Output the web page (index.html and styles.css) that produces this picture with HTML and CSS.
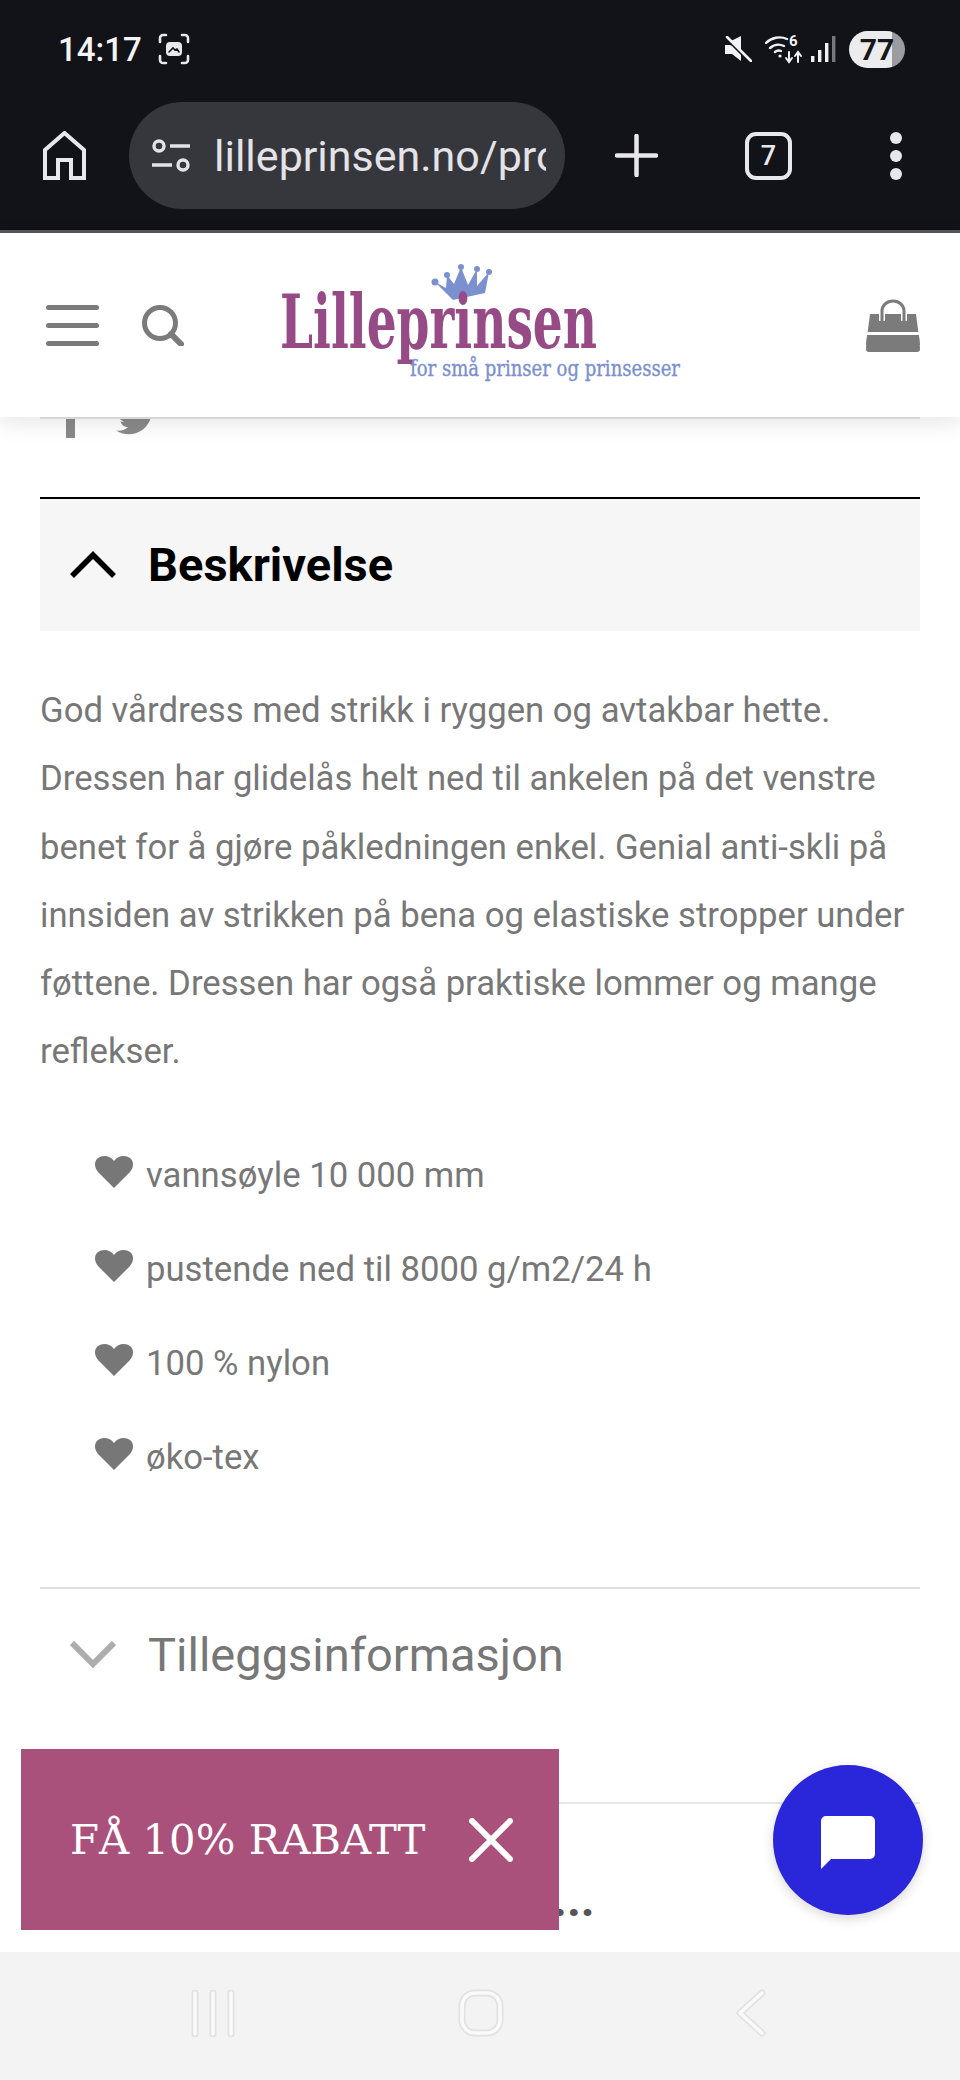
FILE: index.html
```html
<!DOCTYPE html>
<html lang="en">
<head>
  <meta charset="UTF-8">
  <meta name="viewport" content="width=device-width, initial-scale=1.0">
  <title>Lilleprinsen</title>
  <link rel="stylesheet" href="styles.css">
</head>
<body>
  <div class="phone">
    <div class="chrome">
      <div class="status">
        <span class="clock">14:17</span>
        <svg class="shot" viewBox="0 0 32 32" fill="none" stroke="#e8e8ec" stroke-width="2.6" stroke-linecap="round">
          <path d="M2 9V5a3 3 0 0 1 3-3h3M24 2h3a3 3 0 0 1 3 3v4M30 23v4a3 3 0 0 1-3 3h-3M8 30H5a3 3 0 0 1-3-3v-4"/>
          <rect x="8" y="9" width="16" height="14" rx="4" fill="#e8e8ec" stroke="none"/>
          <path d="M11 19l4-4 2 2 2-1 2 3" stroke="#111318" stroke-width="1.6"/>
        </svg>
        <span class="status-space"></span>
        <svg class="mute" viewBox="0 0 27 26" fill="#f2f2f4">
          <path d="M0 9h5l2 1 9 9 0 0v6l-9-7H0z"/>
          <path d="M6 5l10-5v15z"/>
          <path d="M2 1l24 24" stroke="#f2f2f4" stroke-width="2.6" stroke-linecap="round"/>
        </svg>
        <svg class="wifi" viewBox="0 0 38 30" fill="none" stroke="#f2f2f4" stroke-width="2.4" stroke-linecap="round">
          <path d="M1 9a19 19 0 0 1 21-4M5 14a13 13 0 0 1 14-2M10 18a6 6 0 0 1 6-1"/>
          <circle cx="15" cy="22" r="1.6" fill="#f2f2f4" stroke="none"/>
          <path d="M24 18v9M21 24l3 4 3-4M33 28v-9M30 22l3-4 3 4" stroke-width="2"/>
          <text class="wifi-six" x="24" y="12">6</text>
        </svg>
        <svg class="signal" viewBox="0 0 25 26">
          <rect x="0" y="20" width="3.4" height="6" fill="#f2f2f4"/>
          <rect x="7" y="14" width="3.4" height="12" fill="#f2f2f4"/>
          <rect x="14" y="7" width="3.4" height="19" fill="#f2f2f4"/>
          <rect x="21" y="0" width="3.4" height="26" fill="#77787c"/>
        </svg>
        <span class="battery">77</span>
      </div>
      <div class="toolbar">
        <svg class="home" viewBox="0 0 43 49" fill="none" stroke="#e8e8ec" stroke-width="4">
          <path d="M2 47V19L21.500 2 41 19v28H28V29H15v18z"/>
        </svg>
        <div class="url-pill">
          <svg class="tune" viewBox="0 0 38 33" fill="none" stroke="#e3e3e8" stroke-width="3.400">
            <circle cx="7" cy="7" r="5"/>
            <path d="M18 7h20M0 26h20"/>
            <circle cx="31" cy="26" r="5"/>
          </svg>
          <span class="url-text">lilleprinsen.no/produkt</span>
        </div>
        <svg class="plus" viewBox="0 0 43 43" stroke="#e8e8ec" stroke-width="4.500" stroke-linecap="round">
          <path d="M21.500 2v39M2 21.500h39"/>
        </svg>
        <span class="tabs">7</span>
        <div class="dots"><i></i><i></i><i></i></div>
      </div>
    </div>

    <header class="site-head">
      <div class="burger"><i></i><i></i><i></i></div>
      <svg class="search" viewBox="0 0 42 41" fill="none" stroke="#7b7b7b" stroke-width="5">
        <circle cx="18" cy="18" r="15.500"/>
        <path d="M29 29l10 10" stroke-width="6" stroke-linecap="round"/>
      </svg>
      <svg class="logo" viewBox="0 0 420 130">
        <path fill="#7b90cf" d="M165 22l18 18 32-7 4-21-12 14-0-17-9 16-7-18-7 17-7-9-1 13z"/>
        <g fill="#7b90cf">
          <circle cx="165" cy="22" r="3.500"/>
          <circle cx="177" cy="15" r="3"/>
          <circle cx="191" cy="7" r="3"/>
          <circle cx="207" cy="9" r="3"/>
          <circle cx="219" cy="12" r="3"/>
        </g>
        <text class="logo-name" x="10" y="88" textLength="317" lengthAdjust="spacingAndGlyphs">Lilleprinsen</text>
        <text class="logo-sub" x="140" y="116" textLength="270" lengthAdjust="spacingAndGlyphs">for små prinser og prinsesser</text>
      </svg>
      <svg class="bag" viewBox="0 0 54 53">
        <path d="M4 15h46l4 31H0z" fill="#7b7b7b"/>
        <path d="M1 36h52l1 14a3 3 0 0 1-3 3H3a3 3 0 0 1-3-3z" fill="#7b7b7b"/>
        <path d="M0 33h54v3H0z" fill="#fff"/>
        <path d="M16 22V12a11 10 0 0 1 22 0v10" fill="none" stroke="#fff" stroke-width="6"/>
        <path d="M16 22V12a11 10 0 0 1 22 0v10" fill="none" stroke="#7b7b7b" stroke-width="3"/>
      </svg>
    </header>

    <main class="page">
      <div class="share">
        <span class="fb"></span>
        <svg class="bird" viewBox="0 0 24 24" fill="#8a8a8a">
          <path d="M23.950 4.570a10 10 0 0 1-2.820.77 4.960 4.960 0 0 0 2.160-2.720c-.95.55-2 .95-3.120 1.180a4.920 4.920 0 0 0-8.380 4.480C7.690 8.100 4.070 6.130 1.640 3.160a4.820 4.820 0 0 0-.67 2.480c0 1.710.87 3.210 2.190 4.100a4.900 4.900 0 0 1-2.230-.61v.06a4.920 4.920 0 0 0 3.950 4.830 5 5 0 0 1-2.210.08 4.940 4.940 0 0 0 4.600 3.420A9.870 9.870 0 0 1 0 19.540a13.940 13.940 0 0 0 7.550 2.210c9.050 0 14-7.500 14-13.980 0-.21 0-.42-.02-.63a9.940 9.940 0 0 0 2.460-2.550z"/>
        </svg>
      </div>

      <section class="acc-open">
        <div class="acc-head">
          <svg class="chev" viewBox="0 0 46 27" fill="none" stroke="#000" stroke-width="5.500">
            <path d="M2 25L23 4l21 21"/>
          </svg>
          <h2>Beskrivelse</h2>
        </div>
        <p class="desc">God vårdress med strikk i ryggen og avtakbar hette. Dressen har glidelås helt ned til ankelen på det venstre benet for å gjøre påkledningen enkel. Genial anti-skli på innsiden av strikken på bena og elastiske stropper under føttene. Dressen har også praktiske lommer og mange reflekser.</p>
        <ul class="facts">
          <li><svg class="heart" viewBox="0 0 38 32"><path d="M19 32L3 16C-1 11-1 5 3 2c4-3 12-3 16 3 4-6 12-6 16-3 4 3 4 9 0 14z"/></svg>vannsøyle 10 000 mm</li>
          <li><svg class="heart" viewBox="0 0 38 32"><path d="M19 32L3 16C-1 11-1 5 3 2c4-3 12-3 16 3 4-6 12-6 16-3 4 3 4 9 0 14z"/></svg>pustende ned til 8000 g/m2/24 h</li>
          <li><svg class="heart" viewBox="0 0 38 32"><path d="M19 32L3 16C-1 11-1 5 3 2c4-3 12-3 16 3 4-6 12-6 16-3 4 3 4 9 0 14z"/></svg>100 % nylon</li>
          <li><svg class="heart" viewBox="0 0 38 32"><path d="M19 32L3 16C-1 11-1 5 3 2c4-3 12-3 16 3 4-6 12-6 16-3 4 3 4 9 0 14z"/></svg>øko-tex</li>
        </ul>
      </section>

      <section class="acc-closed">
        <div class="acc-head-plain">
          <svg class="chev" viewBox="0 0 46 27" fill="none" stroke="#adadad" stroke-width="6">
            <path d="M2 2l21 21L44 2"/>
          </svg>
          <h3>Tilleggsinformasjon</h3>
        </div>
      </section>

      <section class="more">
        <span class="more-dots">...</span>
      </section>
    </main>

    <nav class="android-nav">
      <svg class="nav-recent" viewBox="0 0 44 47" fill="none" stroke-linecap="round">
        <path d="M4 3v41M22 3v41M40 3v41" stroke="#e2e2e2" stroke-width="7"/>
        <path d="M4 3v41M22 3v41M40 3v41" stroke="#fafafa" stroke-width="3.500"/>
      </svg>
      <svg class="nav-home" viewBox="0 0 46 48" fill="none">
        <rect x="4" y="4" width="38" height="40" rx="13" stroke="#e2e2e2" stroke-width="7"/>
        <rect x="4" y="4" width="38" height="40" rx="13" stroke="#fafafa" stroke-width="3.500"/>
      </svg>
      <svg class="nav-back" viewBox="0 0 31 48" fill="none" stroke-linecap="round" stroke-linejoin="round">
        <path d="M27 4L5 24l22 20" stroke="#e2e2e2" stroke-width="7"/>
        <path d="M27 4L5 24l22 20" stroke="#fafafa" stroke-width="3.500"/>
      </svg>
    </nav>

    <div class="promo">
      <span>FÅ 10% RABATT</span>
      <svg class="promo-x" viewBox="0 0 44 44" stroke="#fff" stroke-width="6" stroke-linecap="round">
        <path d="M3 3l38 38M41 3L3 41"/>
      </svg>
    </div>

    <div class="chat">
      <svg class="chat-icon" viewBox="0 0 54 53">
        <path fill="#fff" d="M5 0h44a5 5 0 0 1 5 5v33a5 5 0 0 1-5 5H10L0 53V5a5 5 0 0 1 5-5z"/>
      </svg>
    </div>
  </div>
</body>
</html>
```

FILE: styles.css
```css
* {
  box-sizing: border-box;
}

body {
  margin: 0;
  font-family: Roboto, Arial, sans-serif;
  background-color: #fff;
}

.phone {
  position: relative;
  display: flex;
  flex-direction: column;
  width: 960px;
  height: 2080px;
  overflow: hidden;
}

/* browser chrome */
.chrome {
  height: 233px;
  flex-shrink: 0;
  background-color: #111318;
  border-bottom: 3px solid #55565b;
}

.status {
  display: flex;
  align-items: center;
  height: 98px;
  padding: 0 55px 0 58px;
}

.clock {
  font-size: 33px;
  font-weight: 500;
  color: #f4f4f6;
}

.shot {
  width: 32px;
  height: 32px;
  margin-left: 16px;
}

.status-space {
  flex: 1;
}

.mute {
  width: 27px;
  height: 26px;
}

.wifi {
  width: 38px;
  height: 30px;
  margin-left: 13px;
}

.wifi-six {
  font-family: Roboto, sans-serif;
  font-size: 15px;
  font-weight: 700;
  fill: #f2f2f4;
  stroke: none;
}

.signal {
  width: 25px;
  height: 26px;
  margin-left: 8px;
}

.battery {
  width: 56px;
  height: 37px;
  margin-left: 13px;
  border-radius: 19px;
  background: linear-gradient(90deg, #ececee 77%, #9c9ca0 77%);
  color: #17181c;
  font-size: 30px;
  font-weight: 700;
  line-height: 37px;
  text-align: center;
}

.toolbar {
  display: flex;
  align-items: center;
  height: 107px;
  margin-top: 4px;
  padding-left: 43px;
}

.home {
  width: 43px;
  height: 49px;
}

.url-pill {
  display: flex;
  align-items: center;
  width: 436px;
  height: 107px;
  margin-left: 43px;
  padding: 0 19px 0 23px;
  border-radius: 54px;
  background-color: #36373c;
  overflow: hidden;
}

.tune {
  width: 38px;
  height: 33px;
  flex-shrink: 0;
}

.url-text {
  margin-left: 24px;
  font-size: 43px;
  color: #e3e3e8;
  white-space: nowrap;
  overflow: hidden;
}

.plus {
  width: 43px;
  height: 43px;
  margin-left: 50px;
}

.tabs {
  width: 47px;
  height: 48px;
  margin-left: 87px;
  border: 4px solid #e8e8ec;
  border-radius: 11px;
  color: #e8e8ec;
  font-size: 27px;
  font-weight: 500;
  line-height: 40px;
  text-align: center;
}

.dots {
  display: flex;
  flex-direction: column;
  gap: 6px;
  margin-left: 98px;
}

.dots i {
  width: 12px;
  height: 12px;
  border-radius: 50%;
  background-color: #e8e8ec;
}

/* site header */
.site-head {
  position: relative;
  z-index: 2;
  display: flex;
  align-items: center;
  height: 184px;
  flex-shrink: 0;
  padding: 0 40px 0 46px;
  background-color: #fff;
  box-shadow: 0 6px 22px rgba(0, 0, 0, 0.1);
}

.burger {
  display: flex;
  flex-direction: column;
  gap: 13px;
  width: 53px;
}

.burger i {
  height: 5px;
  border-radius: 3px;
  background-color: #7b7b7b;
}

.search {
  width: 42px;
  height: 41px;
  margin-left: 43px;
}

.logo {
  width: 420px;
  height: 130px;
  margin-left: 86px;
}

.logo-name {
  font-family: "DejaVu Serif", serif;
  font-size: 74px;
  font-weight: 700;
  fill: #964a86;
}

.logo-sub {
  font-family: "DejaVu Serif", serif;
  font-size: 23px;
  fill: #7b90cf;
  stroke: #7b90cf;
  stroke-width: 0.4px;
}

.bag {
  width: 54px;
  height: 53px;
  margin-left: auto;
}

/* product tabs */
.page {
  flex: 1;
  padding: 0 40px;
  overflow: hidden;
}

.share {
  display: flex;
  align-items: flex-end;
  gap: 41px;
  height: 21px;
  margin-bottom: 59px;
  border-top: 2px solid #e6e6e6;
  overflow: hidden;
}

.fb {
  width: 9px;
  height: 21px;
  margin-left: 26px;
  background-color: #8a8a8a;
}

.bird {
  width: 40px;
  height: 40px;
  flex-shrink: 0;
}

.acc-open {
  border-top: 2px solid #000;
}

.acc-head {
  display: flex;
  align-items: center;
  height: 132px;
  padding: 0 0 2px 30px;
  background-color: #f6f6f6;
}

.chev {
  width: 46px;
  height: 27px;
}

.acc-head h2 {
  margin: 0 0 0 32px;
  font-size: 47px;
  font-weight: 700;
  color: #000;
}

.desc {
  margin: 45px 0 0;
  font-size: 34.7px;
  line-height: 68.3px;
  color: #777;
}

.facts {
  margin: 42px 0 0;
  padding: 0 0 0 55px;
  list-style: none;
}

.facts li {
  display: flex;
  align-items: center;
  height: 94px;
  font-size: 34.7px;
  color: #777;
}

.heart {
  width: 38px;
  height: 32px;
  margin-right: 13px;
  margin-top: -6px;
  fill: #777;
}

.acc-closed {
  margin-top: 83px;
  border-top: 2px solid #ddd;
}

.acc-head-plain {
  display: flex;
  align-items: center;
  height: 132px;
  margin-bottom: 81px;
  padding-left: 30px;
}

.acc-head-plain h3 {
  margin: 0 0 0 32px;
  font-size: 47px;
  font-weight: 400;
  color: #777;
}

.more {
  border-top: 2px solid #e8e8e8;
}

.more-dots {
  display: block;
  margin: 66px 0 0 513px;
  font-size: 48px;
  font-weight: 700;
  line-height: 60px;
  color: #555;
}

/* android buttons */
.android-nav {
  position: relative;
  display: flex;
  align-items: center;
  height: 128px;
  flex-shrink: 0;
  padding: 0 0 6px 191px;
  background-color: #f3f3f3;
}

.nav-recent {
  width: 44px;
  height: 47px;
}

.nav-home {
  width: 46px;
  height: 48px;
  margin-left: 223px;
}

.nav-back {
  width: 31px;
  height: 48px;
  margin-left: 231px;
}

/* floating things */
.promo {
  position: absolute;
  left: 21px;
  top: 1749px;
  z-index: 3;
  display: flex;
  align-items: center;
  width: 538px;
  height: 181px;
  padding-left: 49px;
  background-color: #a9517b;
  color: #fff;
  font-family: "DejaVu Serif", serif;
  font-size: 41.8px;
  white-space: nowrap;
}

.promo-x {
  width: 44px;
  height: 44px;
  margin-left: 44px;
}

.chat {
  position: absolute;
  left: 773px;
  top: 1765px;
  z-index: 3;
  display: flex;
  align-items: center;
  justify-content: center;
  width: 150px;
  height: 150px;
  border-radius: 50%;
  background-color: #2a26d9;
  box-shadow: 0 4px 12px rgba(0, 0, 0, 0.15);
}

.chat-icon {
  width: 54px;
  height: 53px;
  margin-top: 4px;
}
```
